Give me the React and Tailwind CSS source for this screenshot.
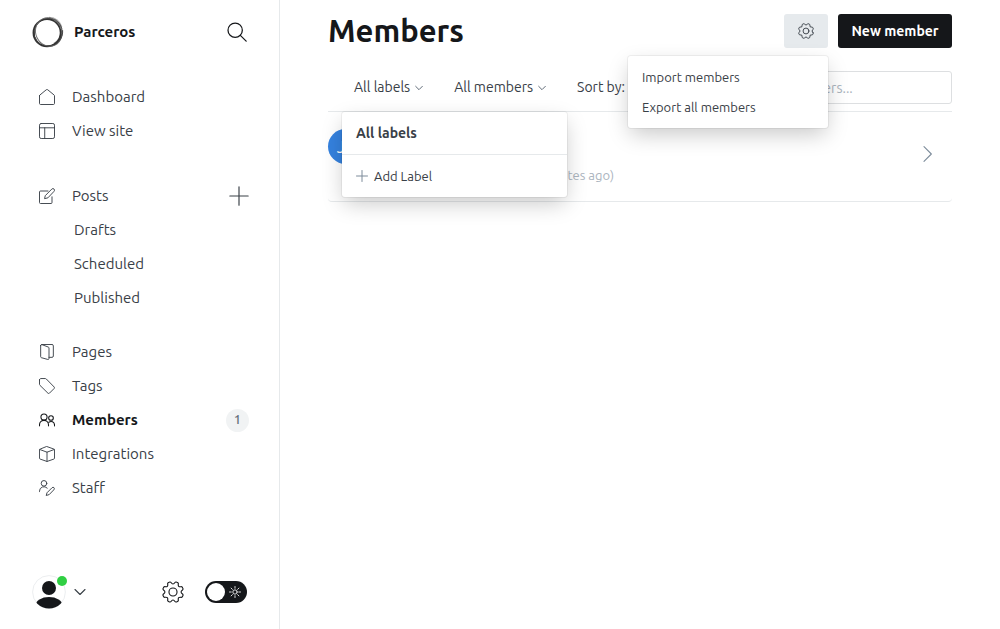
import React from "react";

function Icon({ size = 16, stroke = 1.4, className = "", box = 24, children }) {
  return (
    <svg
      width={size}
      height={size}
      viewBox={`0 0 ${box} ${box}`}
      fill="none"
      stroke="currentColor"
      strokeWidth={stroke}
      strokeLinecap="round"
      strokeLinejoin="round"
      className={`shrink-0 ${className}`}
      aria-hidden="true"
    >
      {children}
    </svg>
  );
}

const HomeIcon = () => (
  <Icon>
    <path d="M.75 10.2v11.5c0 .9.7 1.55 1.55 1.55h19.4c.9 0 1.55-.7 1.55-1.55V10.2c0-.5-.2-.9-.6-1.2L13 1.1a1.6 1.6 0 0 0-2 0L1.350 9c-.4.3-.6.7-.6 1.200z" />
  </Icon>
);

const LayoutIcon = () => (
  <Icon>
    <rect x=".75" y=".75" width="22.5" height="22.5" rx="2.5" />
    <path d="M.75 7.200h22.500M8.600 7.200v16" />
  </Icon>
);

const PostIcon = () => (
  <Icon>
    <path d="M13.500 4.500H2.250A1.500 1.500 0 0 0 .75 6v15.750a1.500 1.500 0 0 0 1.500 1.500H18a1.500 1.500 0 0 0 1.500-1.500v-8.500" />
    <path d="M12.800 14.900 8.300 16l1.100-4.500L19.200 1.600a2.400 2.400 0 0 1 3.400 3.400z" />
  </Icon>
);

const PagesIcon = () => (
  <Icon>
    <path d="M2.500 2.200v16.900c0 .7.4 1.200 1 1.400l9.700 2.700c.9.200 1.800-.4 1.800-1.400V6c0-.7-.4-1.200-1-1.400L4.300 .9c-.9-.3-1.800.3-1.800 1.300z" />
    <path d="M4 .75h15.500a2 2 0 0 1 2 2V18a2 2 0 0 1-2 2H15" />
  </Icon>
);

const TagIcon = () => (
  <Icon>
    <path d="M.75 2.800v6.600c0 .6.200 1.200.7 1.600l12 11.800c.6.600 1.600.6 2.200 0l7.100-7.100c.6-.6.600-1.600 0-2.200L11 1.500a2.400 2.400 0 0 0-1.600-.7H2.800c-1.100 0-2.050.9-2.050 2z" />
  </Icon>
);

const MembersIcon = () => (
  <Icon stroke={1.600}>
    <circle cx="7.500" cy="7.500" r="4.600" />
    <circle cx="18" cy="9" r="3.500" />
    <path d="M.75 20.800v-1.500a6.750 6.750 0 0 1 13.500 0v1.500M14.800 15.400a5.200 5.200 0 0 1 8.500 4v1.400" />
  </Icon>
);

const BoxIcon = () => (
  <Icon>
    <path d="M12 .9 22.300 4.600c.6.200 1 .8 1 1.400v12.200c0 .7-.4 1.200-1 1.400L12 23.200 1.700 19.600c-.6-.2-1-.7-1-1.400V6c0-.6.400-1.200 1-1.400z" />
    <path d="M1.100 5.200 12 9.300l10.900-4.100M12 9.300v13.900" />
  </Icon>
);

const StaffIcon = () => (
  <Icon>
    <circle cx="7.500" cy="5" r="4.200" />
    <path d="M.75 17.500v-.7a6.750 6.750 0 0 1 11.600-4.700" />
    <path d="m14.800 22-4 1.250 1.200-4.100 7.600-7.600a2 2 0 0 1 2.900 2.900z" />
  </Icon>
);

const Plus = ({ size, stroke, className }) => (
  <Icon size={size} stroke={stroke} className={className}>
    <path d="M12 1v22M1 12h22" />
  </Icon>
);

const ChevronDown = ({ size, stroke, className }) => (
  <Icon size={size} stroke={stroke} className={className}>
    <path d="m2 7 10 10L22 7" />
  </Icon>
);

const TEETH = 8;
const STEP = (Math.PI * 2) / TEETH;
const polar = (angle, r) =>
  `${(12 + r * Math.cos(angle)).toFixed(2)} ${(12 + r * Math.sin(angle)).toFixed(2)}`;
const GEAR_PATH =
  Array.from({ length: TEETH }, (_, i) => {
    const a = (i + 0.5) * STEP;
    return [
      `${i === 0 ? "M" : "L"}${polar(a - 0.24 * STEP, 10.6)}`,
      `Q${polar(a - 0.19 * STEP, 11.7)} ${polar(a, 11.5)}`,
      `Q${polar(a + 0.19 * STEP, 11.7)} ${polar(a + 0.24 * STEP, 10.6)}`,
      `Q${polar(a + 0.5 * STEP, 7.2)} ${polar(a + 0.76 * STEP, 10.6)}`,
    ].join("");
  }).join("") + "Z";

const Gear = ({ size, stroke }) => (
  <Icon size={size} stroke={stroke}>
    <path d={GEAR_PATH} />
    <circle cx="12" cy="12" r="4.400" />
  </Icon>
);

const Logo = () => (
  <svg width="32" height="32" viewBox="0 0 32 32" fill="none" stroke="#333" className="shrink-0" aria-hidden="true">
    <path d="M17 2c6 .3 10.500 4 12.200 9" strokeWidth="2.400" stroke="#aaa" />
    <path d="M29.600 15c.2 5-2.500 10.500-7.500 13.200" strokeWidth="2.800" stroke="#999" />
    <circle cx="15" cy="16.800" r="13.600" strokeWidth="1.700" />
    <ellipse cx="16" cy="16.200" rx="14.200" ry="13.600" strokeWidth=".9" transform="rotate(-38 16 16)" />
    <ellipse cx="16.300" cy="15.300" rx="14.500" ry="13" strokeWidth=".9" stroke="#666" transform="rotate(65 16 16)" />
    <path d="M30.600 14c.6 6-2.800 12.500-9 15.200" strokeWidth=".7" />
  </svg>
);

function NavItem({ icon, label, active, children }) {
  return (
    <li className="flex h-[34px] items-center justify-between">
      <a
        href="#"
        className={`flex items-center gap-[17px] text-[15px] leading-5 ${
          active ? "font-bold text-[#15171a]" : "text-[#394047]"
        }`}
      >
        {icon}
        {label}
      </a>
      {children}
    </li>
  );
}

function SubItem({ label }) {
  return (
    <li className="flex h-[34px] items-center pl-[35px]">
      <a href="#" className="text-[15px] leading-5 text-[#394047]">{label}</a>
    </li>
  );
}

function Sidebar() {
  return (
    <aside className="flex w-[280px] shrink-0 flex-col border-r border-[#e6e9eb] pb-5">
      <div className="flex items-center justify-between pt-4 pr-8 pl-8">
        <a href="#" className="flex items-center gap-[10px] text-[15px] font-bold text-[#15171a]">
          <Logo />
          Parceros
        </a>
        <button type="button" aria-label="Search" className="text-[#15171a]">
          <Icon size={20} stroke={1.5}>
            <circle cx="9.800" cy="9.800" r="8.600" />
            <path d="m16 16 7 7" />
          </Icon>
        </button>
      </div>
      <nav className="flex flex-1 flex-col pt-8 pr-[30px] pl-[39px]">
        <ul>
          <NavItem icon={<HomeIcon />} label="Dashboard" />
          <NavItem icon={<LayoutIcon />} label="View site" />
        </ul>
        <ul className="pt-[31px]">
          <NavItem icon={<PostIcon />} label="Posts">
            <button type="button" aria-label="New post" className="text-[#394047]">
              <Plus size={20} stroke={1.400} />
            </button>
          </NavItem>
          <SubItem label="Drafts" />
          <SubItem label="Scheduled" />
          <SubItem label="Published" />
        </ul>
        <ul className="pt-5">
          <NavItem icon={<PagesIcon />} label="Pages" />
          <NavItem icon={<TagIcon />} label="Tags" />
          <NavItem icon={<MembersIcon />} label="Members" active>
            <span className="flex size-[23px] items-center justify-center rounded-full bg-[#f1f3f4] text-[13px] font-medium text-[#626d79]">
              1
            </span>
          </NavItem>
          <NavItem icon={<BoxIcon />} label="Integrations" />
          <NavItem icon={<StaffIcon />} label="Staff" />
        </ul>
      </nav>
      <div className="flex items-center justify-between pr-8 pl-8">
        <button type="button" aria-label="Account menu" className="flex items-center gap-2 text-[#394047]">
          <span className="relative">
            <svg width="34" height="34" viewBox="0 0 34 34" aria-hidden="true">
              <clipPath id="face"><circle cx="17" cy="17" r="16.500" /></clipPath>
              <circle cx="17" cy="17" r="16.400" fill="#fff" stroke="#e6e9eb" strokeWidth=".8" />
              <g clipPath="url(#face)" fill="#15171a">
                <circle cx="17" cy="13" r="7" />
                <ellipse cx="17" cy="30.500" rx="13.500" ry="8.500" />
              </g>
            </svg>
            <span className="absolute top-px -right-px size-[10px] rounded-full bg-[#30cf43]" />
          </span>
          <ChevronDown size={12} stroke={2.200} />
        </button>
        <div className="flex items-center gap-[21px]">
          <a href="#" aria-label="Settings" className="text-[#15171a]">
            <Gear size={22} stroke={1.200} />
          </a>
          <label className="relative flex">
            <input
              type="checkbox"
              aria-label="Night mode"
              className="h-[22px] w-[42px] appearance-none rounded-full bg-[#15171a]"
            />
            <span className="absolute top-[2px] left-[2px] size-[18px] rounded-full bg-white" />
            <span className="absolute top-[5px] right-[6px] text-white">
              <Icon size={12} stroke={1.700}>
                <circle cx="12" cy="12" r="4.300" />
                <path d="M12 1v3.500M12 19.500V23M1 12h3.500M19.500 12H23M4.200 4.200l2.500 2.500M17.300 17.300l2.500 2.500M4.200 19.800l2.500-2.500M17.300 6.700l2.500-2.500" />
              </Icon>
            </span>
          </label>
        </div>
      </div>
    </aside>
  );
}

const MENU =
  "absolute top-full z-10 mt-2 rounded-[3px] bg-white leading-5 text-[#394047] shadow-[0_0_0_1px_rgba(0,0,0,0.05),0_8px_22px_-2px_rgba(0,0,0,0.22)]";

function FilterButton({ label }) {
  return (
    <button type="button" className="flex h-[33px] items-center gap-[5px] px-3 whitespace-nowrap">
      {label}
      <ChevronDown size={8} stroke={3} className="text-[#626d79]" />
    </button>
  );
}

export default function App() {
  return (
    <div className="flex min-h-screen bg-white font-['Ubuntu','Noto_Sans',sans-serif] text-[#394047]">
      <Sidebar />
      <main className="min-w-0 flex-1 px-12 pt-[14px]">
        <header className="flex h-[34px] items-center justify-between">
          <h1 className="text-[31px] leading-9 font-bold text-[#15171a]">Members</h1>
          <div className="flex gap-[10px]">
            <div className="relative">
              <button
                type="button"
                aria-label="Member actions"
                className="flex h-[34px] w-11 items-center justify-center rounded-[3px] bg-[#e6eaed] text-[#394047]"
              >
                <Gear size={16} stroke={1.400} />
              </button>
              <ul className={`${MENU} right-0 w-[200px] py-[6px] text-[13px]`}>
                <li>
                  <button type="button" className="flex h-[30px] w-full items-center px-[14px]">Import members</button>
                </li>
                <li>
                  <button type="button" className="flex h-[30px] w-full items-center px-[14px]">Export all members</button>
                </li>
              </ul>
            </div>
            <button
              type="button"
              className="h-[34px] min-w-[114px] rounded-[3px] bg-[#15171a] px-3 text-[14px] leading-5 font-bold whitespace-nowrap text-white"
            >
              New member
            </button>
          </div>
        </header>
        <div className="flex justify-between border-b border-[#e6e9eb] pt-[23px] pb-[7px] text-[14px]">
          <div className="flex gap-[7px] pl-[14px]">
            <div className="relative">
              <FilterButton label="All labels" />
              <div className={`${MENU} left-0 w-[225px] text-[13px]`}>
                <button type="button" className="flex h-[42px] w-full items-center px-[14px] text-[14px] font-bold">
                  All labels
                </button>
                <button
                  type="button"
                  className="flex h-[43px] w-full items-center gap-[6px] border-t border-[#e6e9eb] px-[14px]"
                >
                  <Plus size={12} stroke={2} className="text-[#7c8b9a]" />
                  Add Label
                </button>
              </div>
            </div>
            <FilterButton label="All members" />
            <FilterButton label="Sort by: " />
          </div>
          <input
            type="text"
            aria-label="Search members"
            placeholder="Search members..."
            className="h-[33px] w-[227px] min-w-0 rounded-[3px] border border-[#dddfe1] px-3 placeholder:text-[#abb4be]"
          />
        </div>
        <ul>
          <li className="rounded-b border-b border-[#e6e9eb]">
            <a href="#" className="flex h-[89px] justify-between pt-[17px] pr-4">
              <div className="flex items-start gap-3">
                <span className="flex size-[35px] items-center justify-center rounded-full bg-[#3582df] text-[16px] text-white">
                  JC
                </span>
                <p className="w-[239px] pt-9 text-right text-[13px] leading-5 whitespace-nowrap text-[#abb4be]">
                  Created (6 minutes ago)
                </p>
              </div>
              <Icon size={16} stroke={1.600} className="mt-[17px] text-[#7c8b9a]">
                <path d="m6 1 11 11L6 23" />
              </Icon>
            </a>
          </li>
        </ul>
      </main>
    </div>
  );
}
